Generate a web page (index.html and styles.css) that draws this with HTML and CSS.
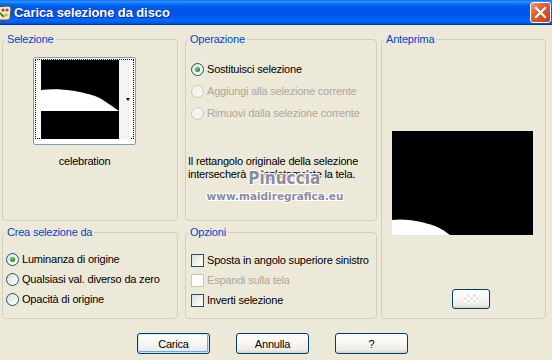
FILE: index.html
```html
<!DOCTYPE html>
<html lang="it">
<head>
  <meta charset="UTF-8">
  <title>Carica selezione da disco</title>
  <link rel="stylesheet" href="styles.css">
</head>
<body>
  <div class="window">

    <!-- Title bar -->
    <div class="titlebar">
      <svg class="app-icon" width="12" height="20" viewBox="0 0 12 20">
        <path d="M-4 4 L8 3 Q11 3 11 6 L10 15 Q10 17 7 17 L-4 17 Z" fill="#f4e9c8" stroke="#7a4a1c" stroke-width="1"/>
        <circle cx="3" cy="7" r="1.6" fill="#d8331a"/>
        <circle cx="7" cy="7" r="1.6" fill="#2f6fd0"/>
        <circle cx="6" cy="12" r="1.6" fill="#e2b21b"/>
        <path d="M0 10 L4 14" stroke="#3c8a2a" stroke-width="2"/>
      </svg>
      <span class="title">Carica selezione da disco</span>
      <span class="close">
        <svg width="13" height="13" viewBox="0 0 13 13">
          <path d="M2 2 L11 11 M11 2 L2 11" stroke="#fff" stroke-width="2.2" stroke-linecap="square"/>
        </svg>
      </span>
    </div>

    <div class="client">
      <div class="panels">

        <fieldset class="group sel">
          <legend>Selezione</legend>
          <div class="thumb-wrap">
            <div class="thumb">
              <div class="thumb-focus">
                <div class="thumb-img">
                  <svg width="78" height="79" viewBox="0 0 78 79">
                    <rect width="78" height="79" fill="#000"/>
                    <path d="M0 30 C18 28 38 31 54 36 C64 40 70 46 78 51 L0 51 Z" fill="#fff"/>
                  </svg>
                </div>
                <div class="thumb-strip"><span class="arrow"></span></div>
              </div>
            </div>
            <div class="thumb-name">celebration</div>
          </div>
        </fieldset>

        <fieldset class="group op">
          <legend>Operazione</legend>
          <div class="choices tall">
            <label class="choice"><span class="radio checked"></span>Sostituisci selezione</label>
            <label class="choice disabled"><span class="radio"></span>Aggiungi alla selezione corrente</label>
            <label class="choice disabled"><span class="radio"></span>Rimuovi dalla selezione corrente</label>
          </div>
          <p class="note">Il rettangolo originale della selezione<br>intersecherà completamente la tela.</p>
        </fieldset>

        <fieldset class="group prev">
          <legend>Anteprima</legend>
          <div class="preview">
            <svg width="141" height="104" viewBox="0 0 141 104">
              <rect width="141" height="104" fill="#000"/>
              <path d="M0 89 C14 87 32 91 43 95 C50 98 54 101 58 104 L0 104 Z" fill="#fff"/>
            </svg>
          </div>
          <span class="xp-btn small"><span class="checker"></span></span>
        </fieldset>

        <fieldset class="group src">
          <legend>Crea selezione da</legend>
          <div class="choices">
            <label class="choice"><span class="radio checked"></span>Luminanza di origine</label>
            <label class="choice"><span class="radio"></span>Qualsiasi val. diverso da zero</label>
            <label class="choice"><span class="radio"></span>Opacità di origine</label>
          </div>
        </fieldset>

        <fieldset class="group opt">
          <legend>Opzioni</legend>
          <div class="choices">
            <label class="choice"><span class="check"></span>Sposta in angolo superiore sinistro</label>
            <label class="choice disabled"><span class="check"></span>Espandi sulla tela</label>
            <label class="choice"><span class="check"></span>Inverti selezione</label>
          </div>
        </fieldset>

      </div>

      <div class="buttons">
        <span class="xp-btn default">Carica</span>
        <span class="xp-btn">Annulla</span>
        <span class="xp-btn">?</span>
      </div>
    </div>

    <!-- watermark over the dialog -->
    <div class="watermark">
      <span class="wm-name">Pinuccia</span>
      <span class="wm-url">www.maidiregrafica.eu</span>
    </div>
  </div>
</body>
</html>
```

FILE: styles.css
```css
/* Global */
body {
  margin: 0;
  padding: 0;
  background: #ece9d8;
  font-family: "Liberation Sans", Arial, sans-serif;
  font-size: 11px;
  letter-spacing: -0.2px;
  color: #000;
}
.window {
  position: relative;
  width: 552px;
  height: 360px;
  background: #ece9d8;
  overflow: hidden;
}

/* Title bar */
.titlebar {
  height: 25px;
  display: flex;
  align-items: center;
  background: linear-gradient(180deg, #0058ee 0%, #3593ff 4%, #288eff 8%, #127dff 12%, #036ffc 16%, #0262ee 22%, #0057e5 30%, #0054e3 40%, #0055eb 60%, #005bf5 70%, #026afe 80%, #0062ef 88%, #0052d6 94%, #0040ab 97%, #003092 100%);
}
.app-icon {
  margin-left: 0;
}
.title {
  margin-left: 2px;
  color: #fff;
  font-size: 13px;
  font-weight: bold;
  letter-spacing: -0.1px;
  text-shadow: 1px 1px 0 #0a2a9a;
}
.close {
  margin-left: auto;
  margin-right: 1px;
  width: 19px;
  height: 19px;
  border: 1px solid #fff;
  border-radius: 3px;
  background: linear-gradient(135deg, #f09a7a 0%, #e25d36 40%, #cc3d12 100%);
  display: flex;
  align-items: center;
  justify-content: center;
}

/* Group boxes */
.client {
  padding: 8px 0 0 2px;
}
.panels {
  display: grid;
  grid-template-columns: 176px 7px 192px 4px 165px;
  grid-template-rows: 188px 5px 93px;
  grid-template-areas:
    "sel . op . prev"
    ". . . . prev"
    "src . opt . prev";
}
.group {
  margin: 0;
  padding: 0;
  min-width: 0;
  border: 1px solid #d0d0bf;
  border-radius: 4px;
}
.group legend {
  margin-left: 2px;
  padding: 0 2px;
  line-height: 13px;
  color: #0046d5;
}
.sel { grid-area: sel; }
.op { grid-area: op; }
.prev { grid-area: prev; }
.src { grid-area: src; }
.opt { grid-area: opt; }

/* Selection thumbnail */
.thumb-wrap {
  width: 103px;
  margin: 11px 0 0 30px;
  text-align: center;
}
.thumb {
  height: 84px;
  border: 1px solid #7f9db9;
  border-radius: 2px;
  background: #fff;
  padding: 1px;
  box-sizing: content-box;
}
.thumb-focus {
  height: 80px;
  outline: 1px dotted #000;
  outline-offset: -1px;
  display: flex;
  align-items: center;
  padding-left: 6px;
}
.thumb-img {
  height: 79px;
}
.thumb-img svg {
  display: block;
}
.thumb-strip {
  width: 11px;
  height: 79px;
  background: #f4f4f0;
  position: relative;
}
.arrow {
  position: absolute;
  left: 7px;
  top: 38px;
  border-left: 2px solid transparent;
  border-right: 2px solid transparent;
  border-top: 3px solid #000;
}
.thumb-name {
  margin-top: 10px;
  line-height: 13px;
}

/* Radios and checkboxes */
.choices {
  padding: 10px 0 0 3px;
}
.choices.tall {
  padding: 12px 0 0 5px;
}
.op .choice, .tall .choice {
  height: 22px;
}
.choice {
  height: 20px;
  display: flex;
  align-items: center;
  gap: 3px;
  white-space: nowrap;
}
.opt .choices {
  padding: 11px 0 0 5px;
}
.choice.disabled {
  color: #aca899;
}
.radio {
  width: 11px;
  height: 11px;
  border: 1px solid #1c5180;
  border-radius: 50%;
  background: linear-gradient(135deg, #dcdcd7 0%, #f0f0ea 50%, #ffffff 100%);
  display: flex;
  align-items: center;
  justify-content: center;
}
.radio.checked::after {
  content: "";
  width: 5px;
  height: 5px;
  border-radius: 50%;
  background: radial-gradient(circle at 35% 35%, #63d763 0%, #21a121 60%, #1a7f1a 100%);
}
.disabled .radio {
  border-color: #cac8bb;
  background: #f4f3ee;
}
.check {
  width: 11px;
  height: 11px;
  border: 1px solid #1c5180;
  background: linear-gradient(135deg, #dcdcd7 0%, #f0f0ea 50%, #ffffff 100%);
}
.disabled .check {
  border-color: #cac8bb;
  background: #fff;
}
.note {
  margin: 31px 0 0 2px;
  line-height: 13px;
  white-space: nowrap;
}

/* Preview */
.preview {
  margin: 85px 0 0 10px;
  height: 104px;
}
.preview svg {
  display: block;
}
.xp-btn {
  display: flex;
  align-items: center;
  justify-content: center;
  box-sizing: border-box;
  width: 73px;
  height: 21px;
  border: 1px solid #003c74;
  border-radius: 3px;
  background: linear-gradient(180deg, #ffffff 0%, #f6f5f1 50%, #ecebe6 86%, #d6d0c5 100%);
  color: #000;
}
.xp-btn.small {
  width: 38px;
  height: 20px;
  margin: 54px 0 0 70px;
}
.checker {
  width: 14px;
  height: 10px;
  background: repeating-conic-gradient(#e6e6e6 0% 25%, #ffffff 0% 50%) 0 0 / 6px 6px;
}
.xp-btn.default {
  box-shadow: inset 0 0 0 1px #cee7ff, inset -1px -1px 0 1px #69a9f0;
}

/* Bottom buttons */
.buttons {
  display: flex;
  gap: 26px;
  margin-top: 14px;
  padding-left: 135px;
}

/* Watermark */
.watermark {
  position: absolute;
  left: 214px;
  top: 168px;
  width: 122px;
  display: flex;
  flex-direction: column;
  align-items: center;
  color: #8d8b9e;
  text-shadow: 1px 1px 0 #fff, -1px -1px 0 #fff, 1px -1px 0 #fff, -1px 1px 0 #fff;
  letter-spacing: 0;
}
.wm-name {
  font-family: "DejaVu Sans", sans-serif;
  font-size: 18px;
  font-weight: bold;
  line-height: 20px;
  margin-left: 18px;
  transform: scaleX(0.85);
}
.wm-url {
  font-family: "DejaVu Sans", sans-serif;
  font-size: 10.5px;
  font-weight: bold;
  line-height: 14px;
  margin-top: 1px;
}
```
